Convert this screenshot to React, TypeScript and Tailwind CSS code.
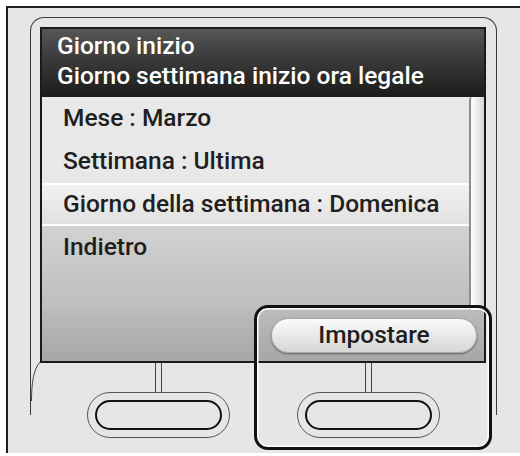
import React from 'react';

const font = { fontFamily: 'Roboto, "Liberation Sans", Arial, sans-serif' };

const rows = [
  { label: 'Mese : Marzo', active: false },
  { label: 'Settimana : Ultima', active: false },
  { label: 'Giorno della settimana : Domenica', active: true },
];

const HardKey = () => (
  <div className="flex flex-col items-center">
    <div className="w-[7px] h-[29px] border-x border-[#444]" />
    <div className="w-[143px] h-[46px] rounded-full border border-[#555] p-[7px] flex">
      <div className="flex-1 rounded-full border-[2.5px] border-[#111]" />
    </div>
  </div>
);

const App = () => {
  return (
    <div className="w-[520px] h-[456px] bg-white pt-[6px] pl-[6px] overflow-hidden font-medium" style={font}>
      <div className="relative w-[514px] h-[447px] border-t-2 border-l-2 border-[#1e1e1e] bg-[#e6e6e6] pt-[9px] pl-[22px]">
        {/* bezel outline */}
        <div className="relative w-[467px] h-[398px] rounded-t-[14px] border-t border-x border-[#3a3a3a] pt-[9px] pl-[9px]">
          {/* screen */}
          <div className="w-[446px] h-[336px] border-2 border-[#1a1a1a] flex flex-col">
            <div className="h-[68px] bg-linear-to-b from-[#565656] to-[#1b1b1b] pt-[2px] pl-[15px] text-white text-[24.5px] leading-[30px] whitespace-nowrap">
              <div>Giorno inizio</div>
              <div>Giorno settimana inizio ora legale</div>
            </div>
            <div className="h-[213px] flex">
              <div className="flex-1 flex flex-col">
                {rows.map((r) =>
                  r.active ? (
                    <div
                      key={r.label}
                      className="h-[43px] flex items-center pl-[21px] border-y-2 border-white bg-linear-to-b from-[#f1f1f1] to-[#e1e1e1] text-[#1f1f1f] text-[24.5px] whitespace-nowrap"
                    >
                      {r.label}
                    </div>
                  ) : (
                    <div
                      key={r.label}
                      className="h-[43px] flex items-center pl-[21px] bg-[#e8e8e8] text-[#1f1f1f] text-[24.5px] whitespace-nowrap"
                    >
                      {r.label}
                    </div>
                  )
                )}
                <div className="flex-1 bg-linear-to-b from-[#d2d2d2] to-[#bdbdbd]">
                  <div className="h-[43px] flex items-center pl-[21px] text-[#1f1f1f] text-[24.5px]">Indietro</div>
                </div>
              </div>
              <div className="w-[15px] border-l-2 border-[#8c8c8c] rounded-tl-[3px] bg-linear-to-r from-white to-[#d6d6d6]" />
            </div>
            <div className="h-[51px] bg-linear-to-b from-[#bbbbbb] to-[#a7a7a7] flex justify-end items-start pt-[8px] pr-[7px]">
              <div className="w-[206px] h-[35px] rounded-full bg-linear-to-b from-[#fbfbfb] to-[#d6d6d6] border border-[#a8a8a8] shadow-[0_1px_2px_rgba(0,0,0,0.45)] flex items-center justify-center text-[#1f1f1f] text-[24.5px]">
                Impostare
              </div>
            </div>
          </div>
          {/* hard keys */}
          <div className="w-[446px] flex justify-center gap-[67px]">
            <HardKey />
            <HardKey />
          </div>
          {/* left bezel curve */}
          <svg className="absolute left-[-1px] top-[343px]" width="16" height="42" viewBox="0 0 16 42" fill="none">
            <path d="M10 1 C4 8 1.5 20 1.5 40" stroke="#444" strokeWidth="1" />
          </svg>
        </div>
        {/* highlighted soft key frame */}
        <div className="absolute left-[246px] top-[297px] w-[238px] h-[145px] rounded-[14px] border-[3px] border-[#111] shadow-[inset_0_0_0_1.5px_#ffffff]" />
      </div>
    </div>
  );
};

export default App;
